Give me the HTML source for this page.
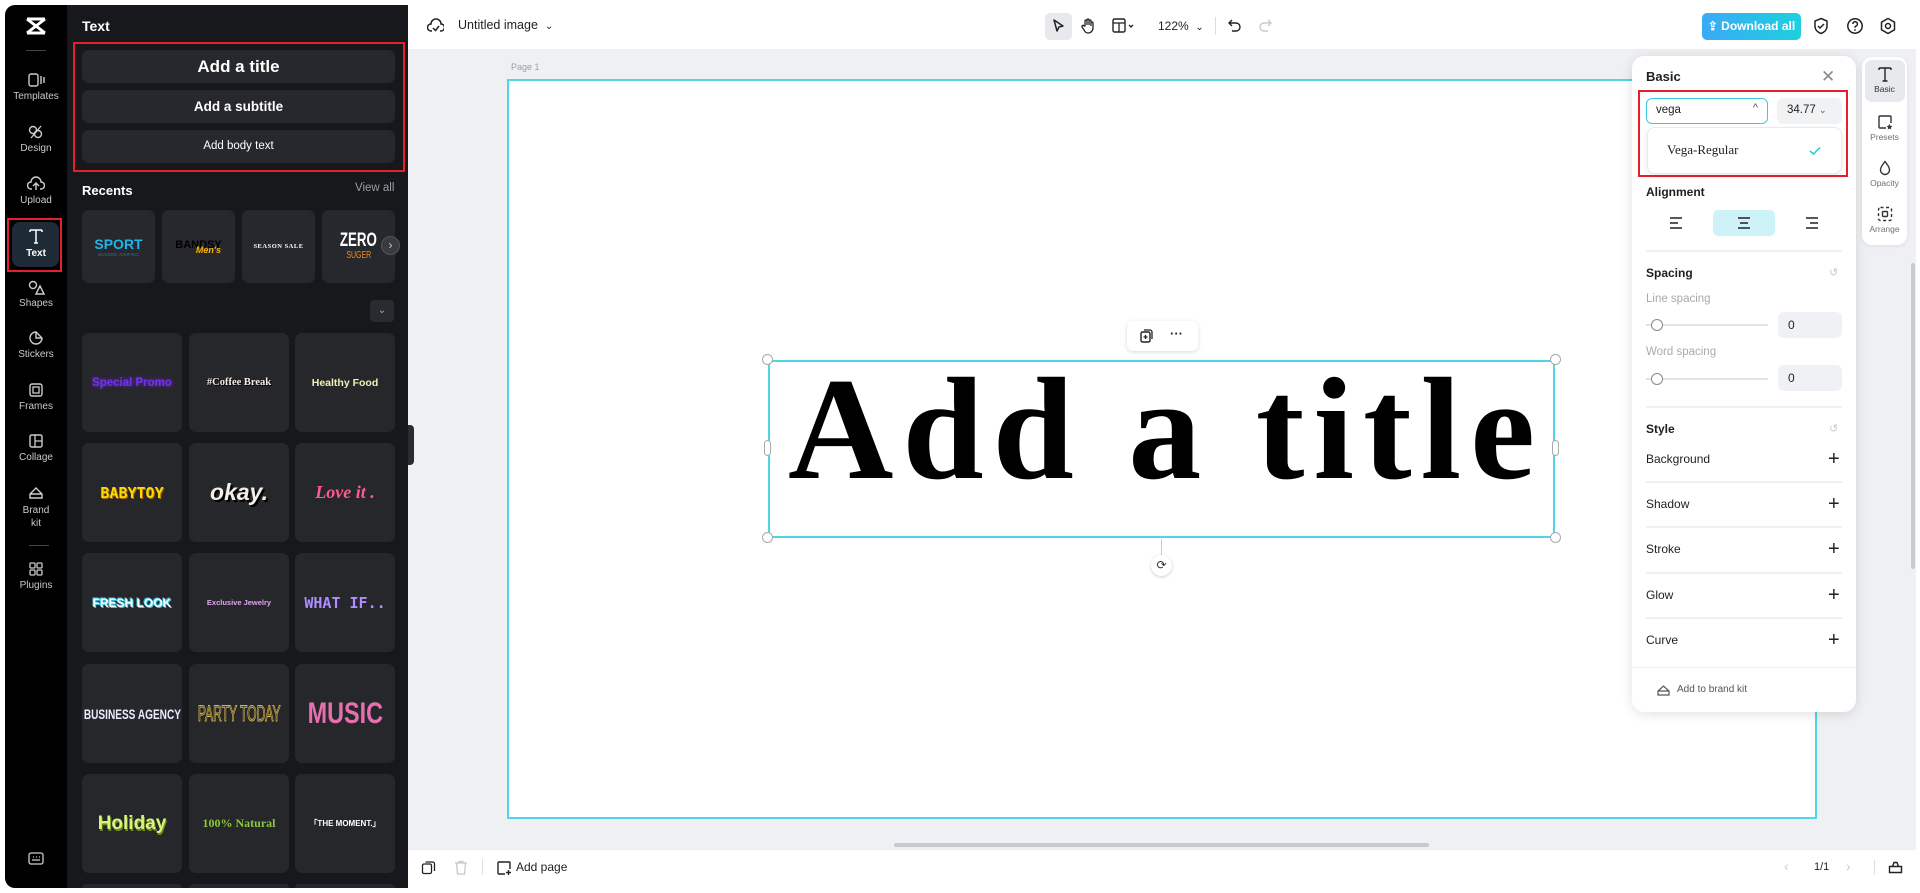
<!DOCTYPE html>
<html><head><meta charset="utf-8">
<style>
*{box-sizing:border-box;margin:0;padding:0}
html,body{width:1920px;height:893px;overflow:hidden}
body{background:#fff;font-family:"Liberation Sans",sans-serif;position:relative}
.a{position:absolute}
.sb{left:5px;top:5px;width:62px;height:883px;background:#000;border-radius:10px 0 0 10px}
.si{position:absolute;left:0;width:62px;text-align:center;color:#c9cacf;font-size:10px}
.si svg{display:block;margin:0 auto 3px}
.panel{left:67px;top:5px;width:341px;height:883px;background:#17181b}
.btn{position:absolute;left:82px;width:313px;background:#27282d;border-radius:7px;color:#fff;font-weight:bold;text-align:center}
.rc{position:absolute;top:210px;width:73px;height:73px;background:#27282d;border-radius:7px;overflow:hidden;display:flex;align-items:center;justify-content:center;flex-direction:column}
.gc{position:absolute;width:100px;height:99px;background:#26272b;border-radius:7px;display:flex;align-items:center;justify-content:center;text-align:center;white-space:nowrap}
.rp{left:1632px;top:56px;width:224px;height:656px;background:#fff;border-radius:12px;box-shadow:0 2px 12px rgba(0,0,0,.12)}
.lbl{position:absolute;left:1646px;font-size:12px;color:#1d1f24}
.b{font-weight:bold}
.div{position:absolute;left:1646px;width:196px;height:2px;background:#eef0f2}
.plus{position:absolute;left:1828px;font-size:20px;color:#222;line-height:1}
.ri{position:absolute;left:1862px;width:45px;text-align:center;font-size:8.5px;color:#6b6f76}
.ri svg{display:block;margin:0 auto 2px}
</style></head><body>

<!-- sidebar -->
<div class="a sb"></div>
<svg class="a" style="left:25px;top:17px" width="22" height="18" viewBox="0 0 22 18"><path d="M2 2 L20 16 M20 2 L2 16 M2 2h18 M2 16h18" stroke="#fff" stroke-width="3" fill="none"/></svg>
<div class="a" style="left:26px;top:50px;width:20px;height:1px;background:#444"></div>
<div class="si" style="top:72px;left:5px"><svg width="18" height="16"><rect x="2" y="2" width="9" height="12" rx="2" stroke="#ccc" stroke-width="1.4" fill="none"/><path d="M14 4v8M17 5v6" stroke="#ccc" stroke-width="1.4"/></svg>Templates</div>
<div class="si" style="top:124px;left:5px"><svg width="18" height="16"><circle cx="6" cy="6" r="3.5" stroke="#ccc" stroke-width="1.4" fill="none"/><circle cx="11" cy="10" r="3.5" stroke="#ccc" stroke-width="1.4" fill="none"/><path d="M4 14l10-12" stroke="#ccc" stroke-width="1.3"/></svg>Design</div>
<div class="si" style="top:176px;left:5px"><svg width="18" height="16"><path d="M5 13H4a3.5 3.5 0 0 1 0-7 5 5 0 0 1 10 0 3.5 3.5 0 0 1 0 7h-1M9 14V7M6 10l3-3 3 3" stroke="#ccc" stroke-width="1.4" fill="none"/></svg>Upload</div>
<div class="a" style="left:7px;top:218px;width:55px;height:54px;border:2px solid #e5202e"></div>
<div class="a" style="left:12px;top:222px;width:47px;height:45px;background:#1e2a36;border-radius:8px"></div>
<div class="si b" style="top:227px;left:5px;color:#fff"><svg width="18" height="18"><path d="M3 3h12M9 3v13M3 3v2M15 3v2M7 16h4" stroke="#fff" stroke-width="1.5" fill="none"/></svg>Text</div>
<div class="si" style="top:279px;left:5px"><svg width="18" height="16"><circle cx="6" cy="6" r="3.5" stroke="#ccc" stroke-width="1.4" fill="none"/><path d="M9 15l4-8 4 8z" stroke="#ccc" stroke-width="1.4" fill="none"/></svg>Shapes</div>
<div class="si" style="top:330px;left:5px"><svg width="18" height="16"><path d="M15 8a6 6 0 1 1-6-6l6 6z M9 2v6h6" stroke="#ccc" stroke-width="1.4" fill="none"/></svg>Stickers</div>
<div class="si" style="top:382px;left:5px"><svg width="18" height="16"><rect x="3" y="2" width="12" height="12" rx="2" stroke="#ccc" stroke-width="1.4" fill="none"/><rect x="6" y="5" width="6" height="6" stroke="#ccc" stroke-width="1.3" fill="none"/></svg>Frames</div>
<div class="si" style="top:433px;left:5px"><svg width="18" height="16"><rect x="3" y="2" width="12" height="12" rx="1.5" stroke="#ccc" stroke-width="1.4" fill="none"/><path d="M8 2v12M8 8h7" stroke="#ccc" stroke-width="1.3"/></svg>Collage</div>
<div class="si" style="top:485px;left:5px;line-height:13px"><svg width="18" height="16"><path d="M3 13V9l6-6 6 6v4zM3 9h12" stroke="#ccc" stroke-width="1.4" fill="none"/></svg>Brand<br>kit</div>
<div class="a" style="left:29px;top:545px;width:20px;height:1px;background:#444"></div>
<div class="si" style="top:561px;left:5px"><svg width="18" height="16"><rect x="3" y="2" width="5" height="5" rx="1" stroke="#ccc" stroke-width="1.3" fill="none"/><rect x="10" y="2" width="5" height="5" rx="1" stroke="#ccc" stroke-width="1.3" fill="none"/><rect x="3" y="9" width="5" height="5" rx="1" stroke="#ccc" stroke-width="1.3" fill="none"/><rect x="10" y="9" width="5" height="5" rx="1" stroke="#ccc" stroke-width="1.3" fill="none"/></svg>Plugins</div>
<svg class="a" style="left:28px;top:852px" width="16" height="14"><rect x="1" y="1" width="14" height="11" rx="2" stroke="#ccc" stroke-width="1.3" fill="none"/><path d="M4 8h8M5 5h1M8 5h1M11 5h1" stroke="#ccc" stroke-width="1.2"/></svg>

<!-- panel -->
<div class="a panel"></div>
<div class="a b" style="left:82px;top:18px;color:#fff;font-size:14px">Text</div>
<div class="a" style="left:73px;top:42px;width:332px;height:130px;border:2px solid #e5202e"></div>
<div class="btn" style="top:50px;height:33px;line-height:33px;font-size:17px">Add a title</div>
<div class="btn" style="top:90px;height:33px;line-height:33px;font-size:13.5px">Add a subtitle</div>
<div class="btn" style="top:130px;height:33px;line-height:33px;font-size:11.5px;font-weight:normal">Add body text</div>
<div class="a b" style="left:82px;top:183px;color:#fff;font-size:13px">Recents</div>
<div class="a" style="left:355px;top:182px;color:#9a9ca3;font-size:11.5px">View all</div>
<div class="rc" style="left:82px"><div style="color:#1fb5e8;font-weight:900;font-size:14px">SPORT</div><div style="color:#2a6d86;font-size:4.5px">BUNGEE JUMPING</div></div>
<div class="rc" style="left:162px"><div style="color:#000;font-weight:900;font-size:11px">BANDSY</div><div style="color:#f5b400;font-style:italic;font-weight:bold;font-size:9px;margin:-6px 0 0 20px">Men's</div></div>
<div class="rc" style="left:242px"><div style="color:#fff;font-family:'Liberation Serif',serif;font-size:6.5px;font-weight:bold;letter-spacing:.5px">SEASON SALE</div></div>
<div class="rc" style="left:322px"><div style="color:#fff;font-size:19px;transform:scaleX(.7);font-weight:bold;line-height:18px">ZERO</div><div style="color:#f08a1a;font-size:10px;transform:scaleX(.7)">SUGER</div></div>
<div class="a" style="left:381px;top:236px;width:19px;height:19px;border-radius:50%;background:#3a3b40;border:1px solid #555;color:#ccc;font-size:12px;line-height:16px;text-align:center">›</div>
<div class="a" style="left:370px;top:300px;width:24px;height:22px;border-radius:4px;background:#2a2b30;color:#aaa;font-size:10px;text-align:center;line-height:22px">⌄</div>

<div class="gc" style="left:82px;top:333px;color:#7a2ff0;font-weight:bold;font-size:11.5px;text-shadow:0 0 4px #6a2be0">Special Promo</div>
<div class="gc" style="left:189px;top:333px;color:#f4eee6;font-family:'Liberation Serif',serif;font-weight:bold;font-size:10.5px;text-shadow:1px 1px 0 #000">#Coffee Break</div>
<div class="gc" style="left:295px;top:333px;color:#f0f0b8;font-weight:900;font-size:10.5px">Healthy Food</div>
<div class="gc" style="left:82px;top:443px;color:#ffd800;font-weight:900;font-size:15px;font-family:'DejaVu Sans Mono',monospace;text-shadow:1px 1px 0 #b36b00">BABYTOY</div>
<div class="gc" style="left:189px;top:443px;color:#f3efe6;font-weight:900;font-style:italic;font-size:23px;text-shadow:2px 2px 0 #000">okay.</div>
<div class="gc" style="left:295px;top:443px;color:#ff5a8c;font-family:'Liberation Serif',serif;font-weight:bold;font-style:italic;font-size:18px">Love it .</div>
<div class="gc" style="left:82px;top:553px;color:#fff;font-weight:900;font-size:12px;text-shadow:1px 1px 0 #36c4e0,-1px -1px 0 #36c4e0">FRESH LOOK</div>
<div class="gc" style="left:189px;top:553px;color:#e0a6f0;font-weight:bold;font-size:7.5px">Exclusive Jewelry</div>
<div class="gc" style="left:295px;top:553px;color:#b08cff;font-weight:900;font-size:15px;font-family:'DejaVu Sans Mono',monospace">WHAT IF..</div>
<div class="gc" style="left:82px;top:664px;color:#e8ecff;font-weight:bold;font-size:14px"><span style="display:inline-block;transform:scaleX(.72)">BUSINESS AGENCY</span></div>
<div class="gc" style="left:189px;top:664px;color:#26272b;font-size:22px;-webkit-text-stroke:1px #d8b84a"><span style="display:inline-block;transform:scaleX(.55)">PARTY TODAY</span></div>
<div class="gc" style="left:295px;top:664px;color:#e86fae;font-weight:900;font-size:30px"><span style="display:inline-block;transform:scaleX(.78)">MUSIC</span></div>
<div class="gc" style="left:82px;top:774px;color:#d8f57a;font-weight:900;font-size:19px;text-shadow:1px 2px 0 #6c8a20">Holiday</div>
<div class="gc" style="left:189px;top:774px;color:#8dc63f;font-family:'Liberation Serif',serif;font-weight:bold;font-size:12px">100% Natural</div>
<div class="gc" style="left:295px;top:774px;color:#fff;font-weight:bold;font-size:8px">「THE MOMENT.」</div>
<div class="gc" style="left:82px;top:884px;height:4px;border-radius:7px 7px 0 0"></div><div class="gc" style="left:189px;top:884px;height:4px;border-radius:7px 7px 0 0"></div><div class="gc" style="left:295px;top:884px;height:4px;border-radius:7px 7px 0 0"></div>

<!-- canvas bg -->
<div class="a" style="left:408px;top:50px;width:1508px;height:799px;background:#eef0f3"></div>
<div class="a" style="left:408px;top:425px;width:6px;height:40px;background:#2a2b30;border-radius:0 4px 4px 0"></div>

<!-- top bar -->
<div class="a" style="left:408px;top:0;width:1508px;height:50px;background:#fff;border-bottom:1px solid #eceef1"></div>
<svg class="a" style="left:427px;top:18px" width="17" height="16"><path d="M5 13H4a3.5 3.5 0 0 1 0-7 5 5 0 0 1 10 0 3.5 3.5 0 0 1 0 7h-1" stroke="#222" stroke-width="1.5" fill="none"/><path d="M6 10l2.5 2.5L12 8" stroke="#222" stroke-width="1.5" fill="none"/></svg>
<div class="a" style="left:458px;top:18px;font-size:12.5px;color:#1d1f24">Untitled image &nbsp;<span style="font-size:10px">⌄</span></div>
<div class="a" style="left:1045px;top:13px;width:27px;height:27px;background:#e7e9ed;border-radius:5px"></div>
<svg class="a" style="left:1050px;top:18px" width="16" height="16"><path d="M4 2l9 6-4 1-2 4z" stroke="#222" stroke-width="1.5" fill="none" stroke-linejoin="round"/></svg>
<svg class="a" style="left:1080px;top:17px" width="17" height="17"><path d="M5 9V4a1 1 0 0 1 2 0v4V3a1 1 0 0 1 2 0v5V4a1 1 0 0 1 2 0v5V6a1 1 0 0 1 2 0v5a5 5 0 0 1-5 5c-2 0-3-1-4-3l-2-3a1 1 0 0 1 2-1z" stroke="#222" stroke-width="1.3" fill="none"/></svg>
<svg class="a" style="left:1112px;top:18px" width="26" height="16"><rect x="1" y="1" width="12" height="13" rx="1.5" stroke="#222" stroke-width="1.4" fill="none"/><path d="M1 5h12M7 5v9M17 7l2 2 2-2" stroke="#222" stroke-width="1.3" fill="none"/></svg>
<div class="a" style="left:1158px;top:19px;font-size:12px;color:#1d1f24">122% &nbsp;<span style="font-size:10px">⌄</span></div>
<div class="a" style="left:1215px;top:17px;width:1px;height:18px;background:#ddd"></div>
<svg class="a" style="left:1228px;top:18px" width="14" height="15"><path d="M4 2L1 5l3 3M1 5h7a4 4 0 0 1 0 8H4" stroke="#222" stroke-width="1.4" fill="none"/></svg>
<svg class="a" style="left:1258px;top:18px" width="14" height="15"><path d="M10 2l3 3-3 3M13 5H6a4 4 0 0 0 0 8h4" stroke="#c8cacf" stroke-width="1.4" fill="none"/></svg>
<div class="a b" style="left:1702px;top:13px;width:99px;height:27px;border-radius:5px;background:linear-gradient(90deg,#3aaaf5,#1ed0de);color:#fff;font-size:12px;line-height:27px;text-align:center">⇪ Download all</div>
<svg class="a" style="left:1812px;top:17px" width="18" height="18"><path d="M9 1.5l6 2.5v5c0 4-3 6.5-6 7.5-3-1-6-3.5-6-7.5V4z" stroke="#222" stroke-width="1.5" fill="none"/><path d="M6 9l2 2 4-4" stroke="#222" stroke-width="1.5" fill="none"/></svg>
<svg class="a" style="left:1846px;top:17px" width="18" height="18"><circle cx="9" cy="9" r="7.2" stroke="#222" stroke-width="1.5" fill="none"/><path d="M6.8 7a2.3 2.3 0 1 1 3 2.2c-.6.3-.8.7-.8 1.5" stroke="#222" stroke-width="1.5" fill="none"/><circle cx="9" cy="13" r=".9" fill="#222"/></svg>
<svg class="a" style="left:1879px;top:17px" width="18" height="18"><path d="M9 1.5l6.5 3.7v7.6L9 16.5l-6.5-3.7V5.2z" stroke="#222" stroke-width="1.5" fill="none"/><circle cx="9" cy="9" r="2.5" stroke="#222" stroke-width="1.5" fill="none"/></svg>

<!-- page -->
<div class="a" style="left:511px;top:62px;font-size:9px;color:#9ba0a8">Page 1</div>
<div class="a" style="left:507px;top:79px;width:1310px;height:740px;background:#fff;border:2px solid #4dd6e8"></div>
<div class="a" style="left:768px;top:360px;width:787px;height:178px;border:2px solid #4dd6e8"></div>
<div class="a" style="left:768px;top:339px;width:787px;text-align:center;font-family:'Liberation Serif',serif;font-weight:bold;font-size:146px;line-height:180px;color:#000;letter-spacing:9px;text-indent:9px;white-space:nowrap">Add a title</div>
<div class="a" style="left:762px;top:354px;width:11px;height:11px;border-radius:50%;background:#fff;border:1px solid #aaa"></div>
<div class="a" style="left:1550px;top:354px;width:11px;height:11px;border-radius:50%;background:#fff;border:1px solid #aaa"></div>
<div class="a" style="left:762px;top:532px;width:11px;height:11px;border-radius:50%;background:#fff;border:1px solid #aaa"></div>
<div class="a" style="left:1550px;top:532px;width:11px;height:11px;border-radius:50%;background:#fff;border:1px solid #aaa"></div>
<div class="a" style="left:764px;top:440px;width:7px;height:16px;border-radius:4px;background:#fff;border:1px solid #aaa"></div>
<div class="a" style="left:1552px;top:440px;width:7px;height:16px;border-radius:4px;background:#fff;border:1px solid #aaa"></div>
<div class="a" style="left:1161px;top:539px;width:1px;height:16px;background:#ccc"></div>
<div class="a" style="left:1151px;top:555px;width:21px;height:21px;border-radius:50%;background:#fff;box-shadow:0 1px 3px rgba(0,0,0,.2);text-align:center;line-height:21px;font-size:12px;color:#333">⟳</div>
<div class="a" style="left:1127px;top:321px;width:71px;height:30px;background:#fff;border-radius:6px;box-shadow:0 1px 4px rgba(0,0,0,.15)"></div>
<svg class="a" style="left:1139px;top:328px" width="15" height="16"><rect x="2" y="4" width="9" height="10" rx="1.5" stroke="#222" stroke-width="1.4" fill="none"/><path d="M5 2h6a2 2 0 0 1 2 2v7M6.5 7v4M4.5 9h4" stroke="#222" stroke-width="1.3" fill="none"/></svg>
<div class="a b" style="left:1170px;top:326px;font-size:13px;color:#222">···</div>

<!-- right panel -->
<div class="a rp"></div>
<div class="lbl b" style="top:69px;font-size:13px">Basic</div>
<div class="a" style="left:1821px;top:67px;font-size:17px;color:#888">✕</div>
<div class="a" style="left:1638px;top:90px;width:210px;height:87px;border:2px solid #e5202e"></div>
<div class="a" style="left:1646px;top:98px;width:122px;height:26px;border:1.5px solid #3cc8e0;border-radius:6px;font-size:11.5px;padding:5px 9px;color:#222">vega<span style="position:absolute;right:9px;top:3px;font-size:11px;color:#555">^</span></div>
<div class="a" style="left:1777px;top:98px;width:65px;height:26px;background:#f0f2f4;border-radius:6px;font-size:11.5px;padding:6px 10px;color:#222">34.77 <span style="font-size:9px;color:#555">⌄</span></div>
<div class="a" style="left:1647px;top:127px;width:195px;height:47px;background:#fff;border:1px solid #e8eaed;border-radius:8px;box-shadow:0 2px 6px rgba(0,0,0,.08)"></div>
<div class="a" style="left:1667px;top:142px;font-family:'Liberation Serif',serif;font-size:13px;color:#222">Vega-Regular</div>
<svg class="a" style="left:1809px;top:146px" width="12" height="10"><path d="M1 5l3.5 3L11 1.5" stroke="#1ec8e0" stroke-width="1.5" fill="none"/></svg>
<div class="lbl b" style="top:185px">Alignment</div>
<div class="a" style="left:1713px;top:210px;width:62px;height:26px;background:#cdf2f8;border-radius:5px"></div>
<svg class="a" style="left:1669px;top:217px" width="14" height="12"><path d="M1 1h12M1 6h8M1 11h12" stroke="#222" stroke-width="1.4"/></svg>
<svg class="a" style="left:1737px;top:217px" width="14" height="12"><path d="M1 1h12M3 6h8M1 11h12" stroke="#222" stroke-width="1.4"/></svg>
<svg class="a" style="left:1805px;top:217px" width="14" height="12"><path d="M1 1h12M5 6h8M1 11h12" stroke="#222" stroke-width="1.4"/></svg>
<div class="div" style="top:250px"></div>
<div class="lbl b" style="top:266px">Spacing</div>
<div class="a" style="left:1829px;top:266px;font-size:11px;color:#c5c8cd">↺</div>
<div class="lbl" style="top:293px;color:#a6aab0;font-size:11.5px">Line spacing</div>
<div class="a" style="left:1646px;top:324px;width:122px;height:2px;background:#dfe2e6"></div>
<div class="a" style="left:1651px;top:319px;width:12px;height:12px;border-radius:50%;background:#fff;border:1px solid #888"></div>
<div class="a" style="left:1778px;top:312px;width:64px;height:26px;background:#eff1f4;border-radius:6px;font-size:12px;padding:6px 10px;color:#222">0</div>
<div class="lbl" style="top:346px;color:#a6aab0;font-size:11.5px">Word spacing</div>
<div class="a" style="left:1646px;top:378px;width:122px;height:2px;background:#dfe2e6"></div>
<div class="a" style="left:1651px;top:373px;width:12px;height:12px;border-radius:50%;background:#fff;border:1px solid #888"></div>
<div class="a" style="left:1778px;top:365px;width:64px;height:26px;background:#eff1f4;border-radius:6px;font-size:12px;padding:6px 10px;color:#222">0</div>
<div class="div" style="top:406px"></div>
<div class="lbl b" style="top:422px">Style</div>
<div class="a" style="left:1829px;top:422px;font-size:11px;color:#c5c8cd">↺</div>
<div class="lbl" style="top:452px">Background</div><div class="plus" style="top:449px">+</div>
<div class="div" style="top:481px"></div>
<div class="lbl" style="top:497px">Shadow</div><div class="plus" style="top:494px">+</div>
<div class="div" style="top:526px"></div>
<div class="lbl" style="top:542px">Stroke</div><div class="plus" style="top:539px">+</div>
<div class="div" style="top:572px"></div>
<div class="lbl" style="top:588px">Glow</div><div class="plus" style="top:585px">+</div>
<div class="div" style="top:617px"></div>
<div class="lbl" style="top:633px">Curve</div><div class="plus" style="top:630px">+</div>
<div class="a" style="left:1632px;top:667px;width:224px;height:1px;background:#eef0f2"></div>
<svg class="a" style="left:1657px;top:684px" width="13" height="12"><path d="M1 11V7l5.5-5 5.5 5v4zM1 7h11" stroke="#555" stroke-width="1.2" fill="none"/></svg>
<div class="a" style="left:1677px;top:684px;font-size:10px;color:#555">Add to brand kit</div>

<!-- right rail -->
<div class="a" style="left:1862px;top:57px;width:45px;height:188px;background:#fff;border-radius:10px;box-shadow:0 1px 4px rgba(0,0,0,.08)"></div>
<div class="a" style="left:1865px;top:60px;width:40px;height:42px;background:#e7e9ec;border-radius:7px"></div>
<div class="ri" style="top:66px;color:#333"><svg width="16" height="16"><path d="M2 2h12M8 2v13M2 2v2M14 2v2M5.5 15h5" stroke="#222" stroke-width="1.4" fill="none"/></svg>Basic</div>
<div class="ri" style="top:114px"><svg width="16" height="16"><path d="M9 14H3a1 1 0 0 1-1-1V3a1 1 0 0 1 1-1h10a1 1 0 0 1 1 1v6" stroke="#333" stroke-width="1.4" fill="none"/><path d="M12.5 10l.9 1.8 2 .3-1.5 1.4.4 2-1.8-1-1.8 1 .4-2-1.5-1.4 2-.3z" fill="#333"/></svg>Presets</div>
<div class="ri" style="top:160px"><svg width="16" height="16"><path d="M8 1.5C5 5.5 3.5 7.5 3.5 10a4.5 4.5 0 0 0 9 0c0-2.5-1.5-4.5-4.5-8.5z" stroke="#333" stroke-width="1.4" fill="none"/></svg>Opacity</div>
<div class="ri" style="top:206px"><svg width="16" height="16"><rect x="1.5" y="1.5" width="13" height="13" rx="2" stroke="#333" stroke-width="1.4" fill="none" stroke-dasharray="3 2.5"/><rect x="5.5" y="5.5" width="5" height="5" rx="1" stroke="#333" stroke-width="1.4" fill="none"/></svg>Arrange</div>
<div class="a" style="left:1911px;top:263px;width:4px;height:306px;background:#c8cbd0;border-radius:2px"></div>

<!-- bottom bar -->
<div class="a" style="left:894px;top:843px;width:535px;height:4px;background:#c6c9ce;border-radius:2px"></div>
<div class="a" style="left:408px;top:849px;width:1508px;height:38px;background:#fff;border-top:1px solid #eceef1"></div>
<svg class="a" style="left:421px;top:860px" width="15" height="15"><rect x="1.5" y="4" width="9" height="9.5" rx="1.5" stroke="#222" stroke-width="1.3" fill="none"/><path d="M4.5 2h7a2 2 0 0 1 2 2v7" stroke="#222" stroke-width="1.3" fill="none"/></svg>
<svg class="a" style="left:454px;top:860px" width="14" height="15"><path d="M1 3h12M5 3V1.5h4V3M2.5 3l1 11h7l1-11" stroke="#c5c8cd" stroke-width="1.3" fill="none"/></svg>
<div class="a" style="left:482px;top:859px;width:1px;height:16px;background:#ddd"></div>
<svg class="a" style="left:496px;top:860px" width="16" height="16"><path d="M9 14H3a1 1 0 0 1-1-1V3a1 1 0 0 1 1-1h10a1 1 0 0 1 1 1v6M12.5 10v5M10 12.5h5" stroke="#222" stroke-width="1.4" fill="none"/></svg>
<div class="a" style="left:516px;top:860px;font-size:12px;color:#1d1f24">Add page</div>
<div class="a" style="left:1784px;top:858px;font-size:14px;color:#c8cacf">‹</div>
<div class="a" style="left:1814px;top:861px;font-size:11px;color:#222">1/1</div>
<div class="a" style="left:1846px;top:858px;font-size:14px;color:#c8cacf">›</div>
<div class="a" style="left:1874px;top:860px;width:1px;height:15px;background:#ddd"></div>
<svg class="a" style="left:1888px;top:860px" width="15" height="14"><path d="M1.5 6.5h12v6h-12zM4.5 6.5l1.5-4h3l1.5 4" stroke="#222" stroke-width="1.4" fill="none"/></svg>
</body></html>
